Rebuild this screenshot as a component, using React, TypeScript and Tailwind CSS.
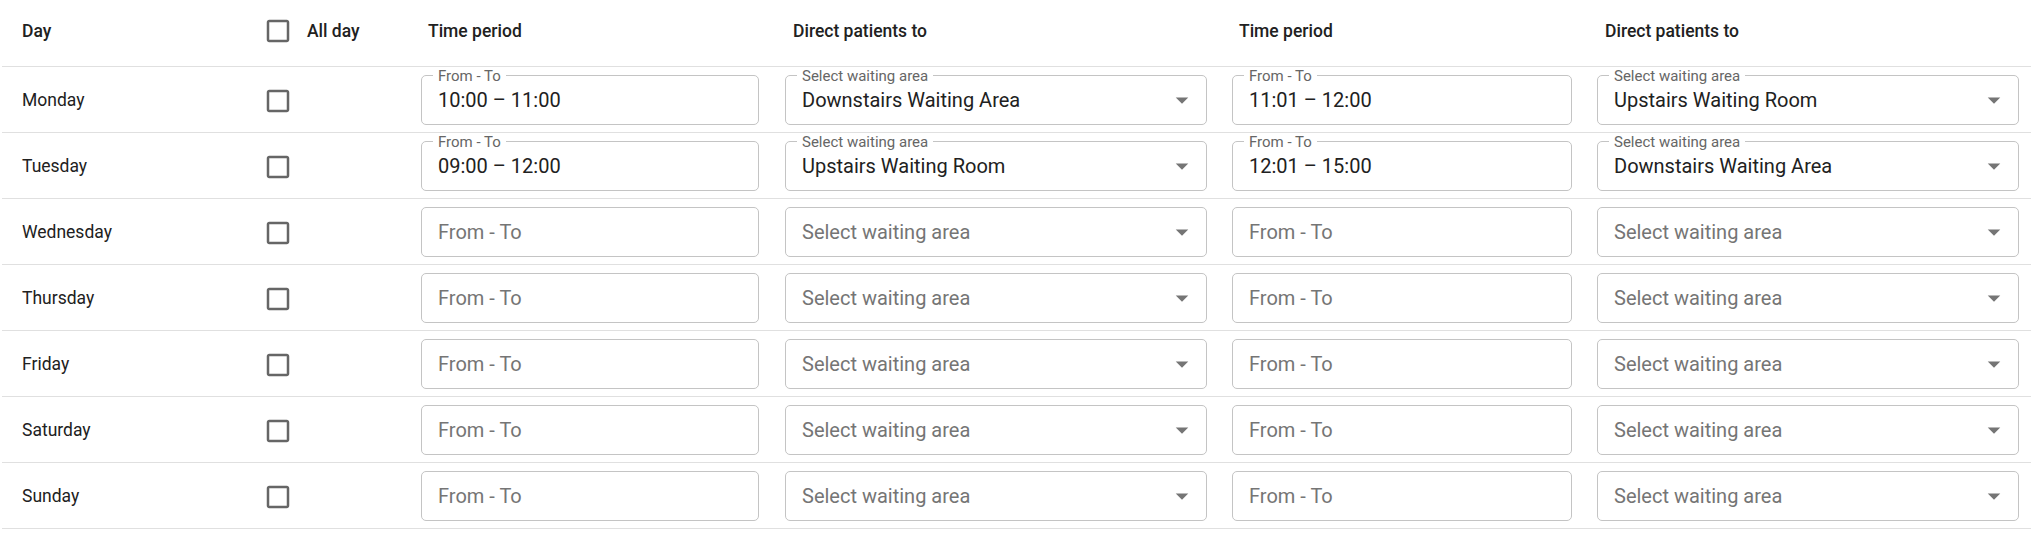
import React from "react";

type Row = {
  day: string;
  t1?: string;
  a1?: string;
  t2?: string;
  a2?: string;
};

const rows: Row[] = [
  {
    day: "Monday",
    t1: "10:00 – 11:00",
    a1: "Downstairs Waiting Area",
    t2: "11:01 – 12:00",
    a2: "Upstairs Waiting Room",
  },
  {
    day: "Tuesday",
    t1: "09:00 – 12:00",
    a1: "Upstairs Waiting Room",
    t2: "12:01 – 15:00",
    a2: "Downstairs Waiting Area",
  },
  { day: "Wednesday" },
  { day: "Thursday" },
  { day: "Friday" },
  { day: "Saturday" },
  { day: "Sunday" },
];

const CheckBox = () => (
  <svg width="30" height="30" viewBox="0 0 24 24" className="shrink-0">
    <path
      fill="#666666"
      d="M19 5v14H5V5h14m0-2H5c-1.11 0-2 .9-2 2v14c0 1.1.89 2 2 2h14c1.1 0 2-.9 2-2V5c0-1.1-.9-2-2-2z"
    />
  </svg>
);

const Arrow = () => (
  <svg width="30" height="30" viewBox="0 0 24 24" className="shrink-0">
    <path fill="#757575" d="M7 10l5 5 5-5z" />
  </svg>
);

// outlined field, label floats in the top border once a value is set
const Field = ({
  width,
  label,
  value,
  select,
}: {
  width: string;
  label: string;
  value?: string;
  select?: boolean;
}) => (
  <div
    className={`relative flex h-[50px] shrink-0 items-center justify-between rounded-[5px] border border-[#c4c4c4] bg-white pl-[16px] pr-[9px] ${width}`}
  >
    {value && (
      <span className="absolute left-[11px] top-0 -translate-y-1/2 bg-white px-[5px] text-[15px] leading-none text-[#666666]">
        {label}
      </span>
    )}
    <span
      className={`text-[20px] leading-none ${
        value ? "text-[#212121]" : "text-[#757575]"
      }`}
    >
      {value || label}
    </span>
    {select && <Arrow />}
  </div>
);

export default function App() {
  return (
    <div className="w-[2040px] bg-white font-[Roboto] text-[#212121]">
      <div className="ml-[2px] w-[2029px]">
        {/* header */}
        <div className="flex h-[67px] items-center border-b border-[#e0e0e0] pb-[4px] text-[17.5px] font-medium">
          <div className="w-[250px] pl-[20px]">Day</div>
          <div className="flex w-[169px] items-center pl-[11px]">
            <CheckBox />
            <span className="ml-[14px]">All day</span>
          </div>
          <div className="w-[338px] pl-[7px]">Time period</div>
          <div className="ml-[26px] w-[422px] pl-[8px]">Direct patients to</div>
          <div className="ml-[25px] w-[340px] pl-[7px]">Time period</div>
          <div className="ml-[25px] w-[422px] pl-[8px]">Direct patients to</div>
        </div>

        {rows.map((r) => (
          <div
            key={r.day}
            className="flex h-[66px] items-center border-b border-[#e0e0e0] text-[17.5px]"
          >
            <div className="w-[250px] pl-[20px] pt-[2px]">{r.day}</div>
            <div className="flex w-[169px] items-center pl-[11px] pt-[2px]">
              <CheckBox />
            </div>
            <Field width="w-[338px]" label="From - To" value={r.t1} />
            <div className="ml-[26px]">
              <Field
                width="w-[422px]"
                label="Select waiting area"
                value={r.a1}
                select
              />
            </div>
            <div className="ml-[25px]">
              <Field width="w-[340px]" label="From - To" value={r.t2} />
            </div>
            <div className="ml-[25px]">
              <Field
                width="w-[422px]"
                label="Select waiting area"
                value={r.a2}
                select
              />
            </div>
          </div>
        ))}
      </div>
    </div>
  );
}
